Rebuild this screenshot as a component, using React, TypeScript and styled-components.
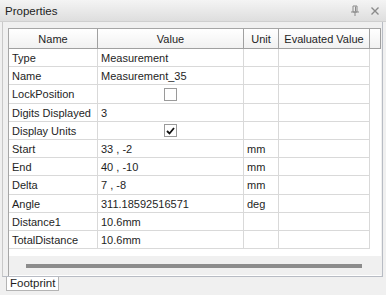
import React from 'react';
import styled, { createGlobalStyle } from 'styled-components';

const GlobalStyle = createGlobalStyle`
    html, body {
        margin: 0;
        padding: 0;
        background: #f0f0f0;
    }
    body {
        font-family: "Liberation Sans", Arial, sans-serif;
        font-size: 11px;
        color: #1a1a1a;
    }
`;

const ROW_H = 18.2;

const Window = styled.div`
    width: 386px;
    height: 295px;
    display: flex;
    flex-direction: column;
    background: #f0f0f0;
    overflow: hidden;
`;

const TitleBar = styled.div`
    height: 22px;
    flex: none;
    display: flex;
    align-items: center;
    padding: 0 4px 0 5px;
    box-sizing: border-box;
    background: linear-gradient(#f4f4f4, #dedede);
    border-bottom: 1px solid #cfcfcf;
`;

const Title = styled.div`
    flex: 1;
    font-size: 11.5px;
    color: #222;
`;

const TitleButton = styled.span`
    width: 14px;
    height: 14px;
    margin-left: 6px;
    display: flex;
    align-items: center;
    justify-content: center;
    color: #8a8a8a;
`;

const Panel = styled.div`
    margin: 0 3px 0 2px;
    padding: 6px 1px 0 5px;
    height: 255px;
    box-sizing: border-box;
    display: flex;
    flex-direction: column;
    border-left: 1px solid #c8c8c8;
    border-right: 1px solid #b8bcc4;
    border-bottom: 1px solid #b8bcc4;
    background: #f0f0f0;
`;

const Frame = styled.div`
    flex: 1;
    display: flex;
    flex-direction: column;
    background: #ffffff;
    border-left: 1px solid #a6a6a6;
    border-top: 1px solid #a6a6a6;
`;

const Grid = styled.div`
    display: grid;
    grid-template-columns: 89px 146px 35px 91px 1fr;
`;

const HeadCell = styled.div`
    height: 20px;
    display: flex;
    align-items: center;
    justify-content: center;
    box-sizing: border-box;
    border-right: 1px solid #a0a0a0;
    border-bottom: 1px solid #a0a0a0;
    background: linear-gradient(#ffffff, #f1f1f1);
    font-size: 11px;
    color: #1e1e1e;
    &:last-child {
        border-right: none;
    }
`;

const Cell = styled.div<{ $last?: boolean }>`
    display: flex;
    align-items: center;
    padding-left: 3px;
    box-sizing: border-box;
    border-right: ${p => (p.$last ? 'none' : '1px solid #d9d9d9')};
    border-bottom: ${p => (p.$last ? 'none' : '1px solid #d9d9d9')};
    white-space: nowrap;
    font-size: 11px;
    color: #1e1e1e;
`;

const CheckCell = styled(Cell)`
    justify-content: center;
    padding-left: 0;
`;

const CheckBox = styled.span`
    width: 13px;
    height: 13px;
    box-sizing: border-box;
    border: 1px solid #9a9a9a;
    background: #ffffff;
    display: flex;
    align-items: center;
    justify-content: center;
`;

const Filler = styled.div`
    height: 7px;
`;

const ScrollArea = styled.div`
    height: 19px;
    background: #f0f0f0;
    display: flex;
    align-items: center;
    padding: 1px 19px 0 17px;
    box-sizing: border-box;
`;

const Thumb = styled.div`
    flex: 1;
    height: 4px;
    background: #8c8c8c;
`;

const TabStrip = styled.div`
    display: flex;
    padding-left: 6px;
`;

const Tab = styled.div`
    height: 13px;
    padding: 0 3px;
    border: 1px solid #b4b4b4;
    border-top: none;
    background: #ffffff;
    font-size: 11.5px;
    line-height: 13px;
    color: #1e1e1e;
`;

type Row = { name: string; value?: string; unit?: string; check?: 'on' | 'off' };

const rows: Row[] = [
    { name: 'Type', value: 'Measurement' },
    { name: 'Name', value: 'Measurement_35' },
    { name: 'LockPosition', check: 'off' },
    { name: 'Digits Displayed', value: '3' },
    { name: 'Display Units', check: 'on' },
    { name: 'Start', value: '33 , -2', unit: 'mm' },
    { name: 'End', value: '40 , -10', unit: 'mm' },
    { name: 'Delta', value: '7 , -8', unit: 'mm' },
    { name: 'Angle', value: '311.18592516571', unit: 'deg' },
    { name: 'Distance1', value: '10.6mm' },
    { name: 'TotalDistance', value: '10.6mm' },
];

const PinIcon = () => (
    <svg width="10" height="12" viewBox="0 0 10 12">
        <path d="M3 1h4v6H3z M1 7h8 M5 7v4" fill="none" stroke="currentColor" strokeWidth="1" />
        <path d="M5.5 1.5v5" stroke="currentColor" strokeWidth="1" />
    </svg>
);

const CloseIcon = () => (
    <svg width="10" height="10" viewBox="0 0 10 10">
        <path d="M1.5 1.5l7 7M8.5 1.5l-7 7" stroke="currentColor" strokeWidth="1.4" />
    </svg>
);

const Tick = () => (
    <svg width="9" height="8" viewBox="0 0 9 8">
        <path d="M1 4l2.5 2.5L8 1" fill="none" stroke="#111" strokeWidth="1.8" />
    </svg>
);

export default function App() {
    return (
        <Window>
            <GlobalStyle />
            <TitleBar>
                <Title>Properties</Title>
                <TitleButton>
                    <PinIcon />
                </TitleButton>
                <TitleButton>
                    <CloseIcon />
                </TitleButton>
            </TitleBar>
            <Panel>
                <Frame>
                    <Grid>
                        <HeadCell>Name</HeadCell>
                        <HeadCell>Value</HeadCell>
                        <HeadCell>Unit</HeadCell>
                        <HeadCell>Evaluated Value</HeadCell>
                        <HeadCell />
                        {rows.map((r, i) => {
                            // spread the fractional row pitch over whole pixels
                            const h = Math.round((i + 1) * ROW_H) - Math.round(i * ROW_H);
                            const style = { height: h };
                            return (
                                <React.Fragment key={r.name}>
                                    <Cell style={style}>{r.name}</Cell>
                                    {r.check ? (
                                        <CheckCell style={style}>
                                            <CheckBox>{r.check === 'on' && <Tick />}</CheckBox>
                                        </CheckCell>
                                    ) : (
                                        <Cell style={style}>{r.value}</Cell>
                                    )}
                                    <Cell style={style}>{r.unit}</Cell>
                                    <Cell style={style} />
                                    <Cell style={style} $last />
                                </React.Fragment>
                            );
                        })}
                    </Grid>
                    <Filler />
                    <ScrollArea>
                        <Thumb />
                    </ScrollArea>
                </Frame>
            </Panel>
            <TabStrip>
                <Tab>Footprint</Tab>
            </TabStrip>
        </Window>
    );
}
